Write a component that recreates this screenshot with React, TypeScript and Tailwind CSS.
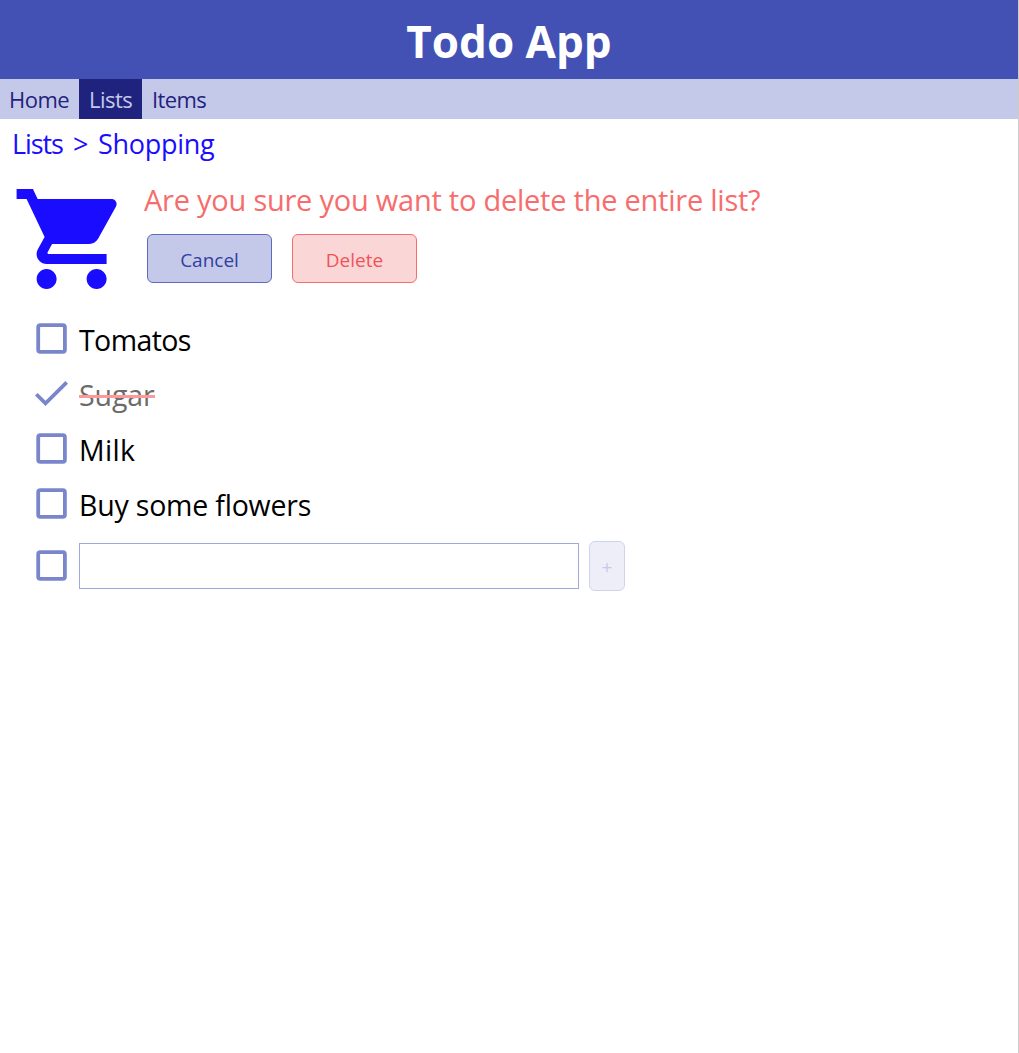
const NAV = [
  { label: 'Home', style: 'w-[79px] pl-[9px] tracking-[-0.5px]' },
  { label: 'Lists', style: 'w-[63px] bg-[#1f237e] pl-[10px] tracking-[-0.5px] text-[#c5c9e9]' },
  { label: 'Items', style: 'pl-[10px] tracking-[-0.6px]' },
];
const ITEMS = [
  { name: 'Tomatos', done: false, spacing: 'tracking-[-0.6px]' },
  { name: 'Sugar', done: true, spacing: 'tracking-[-0.1px]' },
  { name: 'Milk', done: false, spacing: 'tracking-[0.3px]' },
  { name: 'Buy some flowers', done: false, spacing: 'tracking-[-0.2px]' },
];

function Cart() {
  return (
    <svg viewBox="-0.12 0 24 24" className="ml-[11px] h-[120px] w-[120px] shrink-0 fill-[#1a0dff]">
      <path d="M7 18c-1.1 0-1.99.9-1.99 2S5.9 22 7 22s2-.9 2-2-.9-2-2-2zM1 2v2h2l3.6 7.59-1.35 2.45c-.16.28-.25.61-.25.96 0 1.1.9 2 2 2h12v-2H7.42c-.14 0-.25-.11-.25-.25l.03-.12.9-1.63h7.45c.75 0 1.41-.41 1.75-1.03l3.58-6.49c.08-.14.12-.31.12-.48 0-.55-.45-1-1-1H5.21l-.94-2H1zm16 16c-1.1 0-1.99.9-1.99 2s.89 2 1.99 2 2-.9 2-2-.9-2-2-2z" />
    </svg>
  );
}

function Box() {
  return (
    <svg viewBox="0 0 31 31" className="ml-[36px] h-[31px] w-[31px] shrink-0">
      <rect x="2.2" y="2.2" width="26.7" height="26.7" rx="2.2" fill="none" stroke="#7986cb" strokeWidth="3.8" />
    </svg>
  );
}

function Check() {
  return (
    <svg viewBox="3.41 5.59 17.59 13.41" preserveAspectRatio="none" className="ml-[35px] h-[25px] w-[33px] shrink-0 fill-[#7986cb]">
      <path d="M9 16.17L4.83 12l-1.42 1.41L9 19 21 7l-1.41-1.41z" />
    </svg>
  );
}

export default function App() {
  return (
    <div className="min-h-screen border-r border-[#cccccc] bg-white font-['Open_Sans',sans-serif] text-black">
      <header className="flex h-[79px] items-center justify-center bg-[#4351b5] pt-[3px]">
        <h1 className="text-[44px] leading-[60px] font-bold text-white">Todo App</h1>
      </header>
      <nav className="flex h-10 bg-[#c5c9e9] text-[22px] leading-[41px] text-[#1f237e]">
        {NAV.map((item) => (
          <a key={item.label} className={item.style}>
            {item.label}
          </a>
        ))}
      </nav>
      <div className="flex h-[60px] pt-[5px] pl-[12px] text-[27px] leading-[40px] text-[#1a0dff]">
        <span className="w-[61px] tracking-[-1.1px]">Lists</span>
        <span className="w-[25px]">&gt;</span>
        <span className="tracking-[-0.3px]">Shopping</span>
      </div>
      <section className="flex h-[132px]">
        <Cart />
        <div className="ml-[13px]">
          <p className="h-[55px] text-[29px] leading-[42px] tracking-[-0.24px] text-[#f76c6c]">Are you sure you want to delete the entire list?</p>
          <div className="ml-[3px] flex gap-5">
            <button className="h-[49px] w-[125px] rounded-[6px] border border-[#5c6bc0] bg-[#c5c9e9] pt-[3px] text-[19px] text-[#303f9f]">Cancel</button>
            <button className="h-[49px] w-[125px] rounded-[6px] border border-[#f76c6c] bg-[#fbd6d7] pt-[3px] text-[19px] text-[#f05357]">Delete</button>
          </div>
        </div>
      </section>
      <ul>
        {ITEMS.map((item) => (
          <li key={item.name} className="flex h-[55px] items-center">
            {item.done ? <Check /> : <Box />}
            <span className={item.done ? 'relative ml-[11px] w-[76px] pt-[3px] text-[28.5px] leading-[40px] text-[#6b6b6b]' : 'ml-[12px] pt-[3px] text-[28.5px] leading-[40px]'}>
              <span className={item.spacing}>{item.name}</span>
              {item.done && <i className="absolute top-[23px] left-0 h-[3px] w-full bg-[#fb9a9a]" />}
            </span>
          </li>
        ))}
        <li className="flex h-[69px] items-center">
          <Box />
          <input className="ml-[12px] h-[46px] w-[500px] border border-[#9fa8da] bg-white px-2 text-[28px] outline-none" />
          <button className="ml-[10px] h-[50px] w-[36px] rounded-[6px] border border-[#d0d3ed] bg-[#eeeef8] pt-[3px] text-[19px] text-[#c5cae9]">+</button>
        </li>
      </ul>
    </div>
  );
}
